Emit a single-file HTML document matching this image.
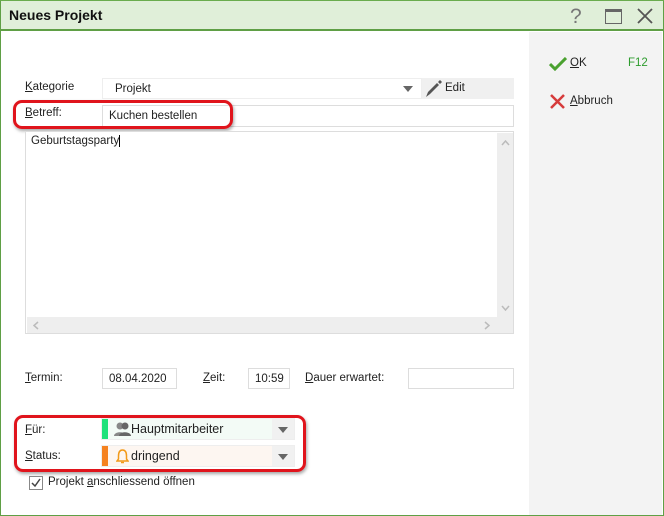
<!DOCTYPE html>
<html><head><meta charset="utf-8"><style>
*{box-sizing:border-box;margin:0;padding:0}
body{width:664px;height:516px;overflow:hidden;font-family:"Liberation Sans",sans-serif;font-size:11.5px;color:#222;background:#fff;position:relative}
.a{position:absolute}
.win{left:0;top:0;width:664px;height:516px;border:1px solid #5f9f45;border-top:2px solid #6aac4e}
.title{left:1px;top:1px;width:662px;height:30px;background:#e0efd9;border-bottom:2px solid #5f9f45}
.title b{position:absolute;left:8px;top:6px;font-size:14px;color:#111}
.side{left:529px;top:32px;width:133px;height:483px;background:#f3f3f3}
.box{border:1px solid #ddd;background:#fff}
.tx{position:absolute;top:50%;transform:translateY(-50%)}
.red{border:3px solid #e0141c;border-radius:9px;box-shadow:1px 2px 3px rgba(0,0,0,.35)}
u{text-decoration:underline}
</style></head><body>
<div class="a win"></div>
<div class="a title"><b>Neues Projekt</b>
<div class="a" style="left:569px;top:4px;font-size:21px;color:#777">?</div>
<div class="a" style="left:604px;top:8px;width:17px;height:15px;border:1.5px solid #666;border-top-width:3px"></div>
<svg class="a" style="left:636px;top:7px" width="16" height="16"><path d="M1 1L15 15M15 1L1 15" stroke="#555" stroke-width="1.8"/></svg>
</div>
<div class="a side">
<svg class="a" style="left:20px;top:25px" width="18" height="14"><path d="M1 7L6 12L17 1" stroke="#4aa12f" stroke-width="3" fill="none"/></svg>
<div class="a" style="left:41px;top:25px"><u>O</u>K</div>
<div class="a" style="left:99px;top:25px;color:#2e9c2e">F12</div>
<svg class="a" style="left:21px;top:62px" width="15" height="15"><path d="M1 1L14 14M14 1L1 14" stroke="#d63b3b" stroke-width="2.5"/></svg>
<div class="a" style="left:41px;top:63px"><u>A</u>bbruch</div>
</div>

<div class="a" style="left:25px;top:81px"><u>K</u>ategorie</div>
<div class="a box" style="left:102px;top:78px;width:320px;height:21px;border-color:#eee"><span class="tx" style="left:12px">Projekt</span>
<svg class="a" style="left:300px;top:7px" width="10" height="6"><path d="M0 0H10L5 6Z" fill="#666"/></svg></div>
<div class="a" style="left:422px;top:78px;width:92px;height:21px;background:#f0f0f0"></div>
<svg class="a" style="left:424px;top:80px" width="18" height="18"><path d="M2 17L4 12L13 3L15 5L6 14Z" fill="#555"/><path d="M14 2L16 0L18 2L16 4Z" fill="#555"/></svg>
<div class="a" style="left:445px;top:82px">Edit</div>

<div class="a box" style="left:102px;top:105px;width:412px;height:22px"><span class="tx" style="left:6px">Kuchen bestellen</span></div>
<div class="a" style="left:25px;top:107px"><u>B</u>etreff:</div>
<div class="a red" style="left:13px;top:100px;width:220px;height:29px"></div>

<div class="a box" style="left:25px;top:131px;width:489px;height:203px">
<div class="a" style="left:5px;top:3px">Geburtstagsparty <span style="border-left:1px solid #000"></span></div>
<div class="a" style="left:471px;top:1px;width:16px;height:184px;background:#eee"></div>
<div class="a" style="left:1px;top:185px;width:470px;height:16px;background:#eee"></div>
<div class="a" style="left:471px;top:185px;width:16px;height:16px;background:#eee"></div>
<svg class="a" style="left:475px;top:8px" width="9" height="6"><path d="M1 5L4.5 1L8 5" stroke="#bbb" fill="none" stroke-width="1.5"/></svg>
<svg class="a" style="left:475px;top:173px" width="9" height="6"><path d="M1 1L4.5 5L8 1" stroke="#bbb" fill="none" stroke-width="1.5"/></svg>
<svg class="a" style="left:458px;top:189px" width="6" height="9"><path d="M1 1L5 4.5L1 8" stroke="#bbb" fill="none" stroke-width="1.5"/></svg>
<svg class="a" style="left:7px;top:189px" width="6" height="9"><path d="M5 1L1 4.5L5 8" stroke="#bbb" fill="none" stroke-width="1.5"/></svg>
</div>

<div class="a" style="left:25px;top:372px"><u>T</u>ermin:</div>
<div class="a box" style="left:102px;top:368px;width:75px;height:21px"><span class="tx" style="left:6px">08.04.2020</span></div>
<div class="a" style="left:203px;top:372px"><u>Z</u>eit:</div>
<div class="a box" style="left:248px;top:368px;width:42px;height:21px"><span class="tx" style="left:6px">10:59</span></div>
<div class="a" style="left:305px;top:372px"><u>D</u>auer erwartet:</div>
<div class="a box" style="left:408px;top:368px;width:106px;height:21px"></div>

<div class="a" style="left:25px;top:424px"><u>F</u>ür:</div>
<div class="a" style="left:101px;top:418px;width:194px;height:22px;background:#f3fbf6;border:1px solid #eee">
<div class="a" style="left:0;top:0;width:6px;height:20px;background:#1ee27a"></div>
<svg class="a" style="left:12px;top:3px" width="18" height="14"><circle cx="6" cy="4" r="3.5" fill="#888"/><path d="M0 14C0 9 12 9 12 14Z" fill="#888"/><circle cx="11" cy="4" r="3.5" fill="#666"/><path d="M5 14C5 9 17 9 17 14Z" fill="#666"/></svg>
<span class="tx" style="left:29px;font-size:12.5px">Hauptmitarbeiter</span>
<div class="a" style="left:170px;top:0;width:22px;height:20px;background:#f1f1f1"></div>
<svg class="a" style="left:176px;top:8px" width="10" height="6"><path d="M0 0H10L5 6Z" fill="#666"/></svg></div>
<div class="a" style="left:25px;top:450px"><u>S</u>tatus:</div>
<div class="a" style="left:101px;top:445px;width:194px;height:22px;background:#fdf6f1;border:1px solid #eee">
<div class="a" style="left:0;top:0;width:6px;height:20px;background:#f58220"></div>
<svg class="a" style="left:14px;top:3px" width="13" height="15"><path d="M6.5 1C3 1 2.5 4 2.5 7V10L1 12H12L10.5 10V7C10.5 4 10 1 6.5 1Z" stroke="#f29a1a" stroke-width="1.5" fill="none"/><path d="M5 13.5H8" stroke="#f29a1a" stroke-width="1.5"/></svg>
<span class="tx" style="left:29px;font-size:12.5px">dringend</span>
<div class="a" style="left:170px;top:0;width:22px;height:20px;background:#f1f1f1"></div>
<svg class="a" style="left:176px;top:8px" width="10" height="6"><path d="M0 0H10L5 6Z" fill="#666"/></svg></div>
<div class="a red" style="left:14px;top:415px;width:292px;height:57px"></div>

<div class="a" style="left:29px;top:476px;width:14px;height:14px;border:1px solid #888;background:#fff"></div>
<svg class="a" style="left:30px;top:477px" width="12" height="12"><path d="M2 6L5 9L10 2" stroke="#444" stroke-width="1.5" fill="none"/></svg>
<div class="a" style="left:48px;top:476px">Projekt <u>a</u>nschliessend öffnen</div>
</body></html>
